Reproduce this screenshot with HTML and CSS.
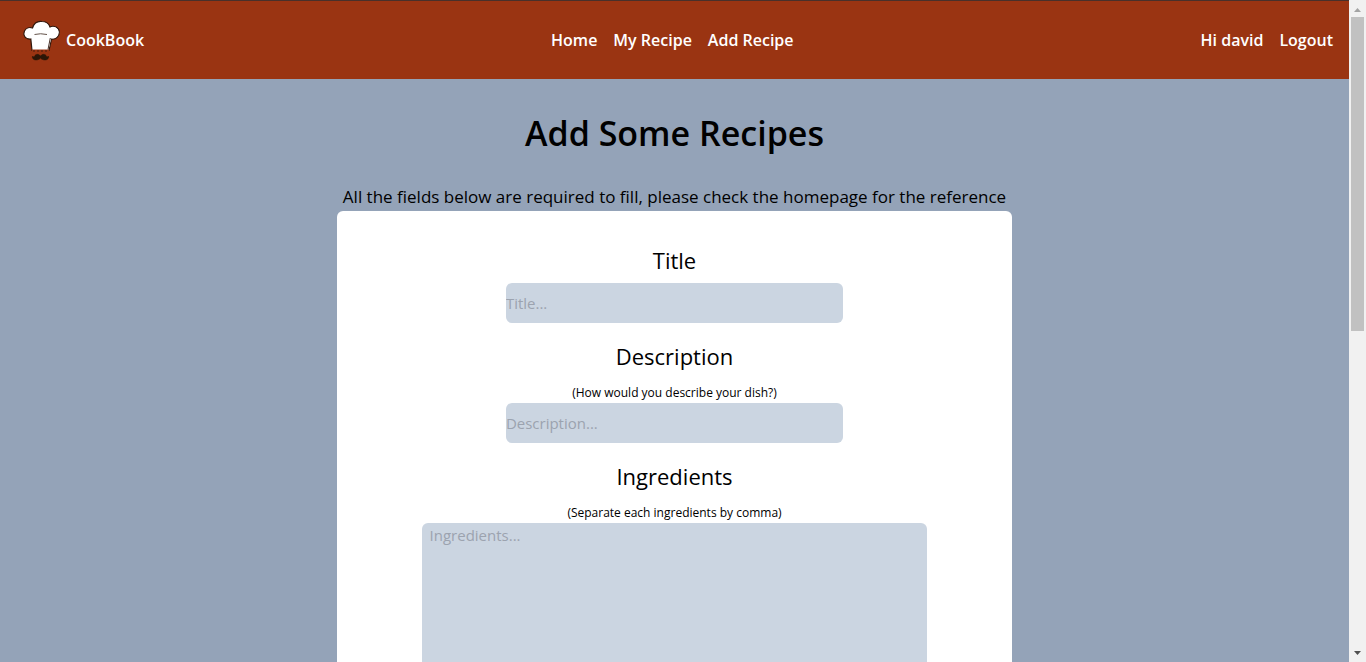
FILE: index.html
```html
<!DOCTYPE html>
<html lang="en">
<head>
<meta charset="utf-8">
<title>CookBook</title>
<link rel="stylesheet" href="styles.css">
</head>
<body>
<div class="page">
  <header class="navbar">
    <a class="brand" href="#">
      <svg class="logo" viewBox="0 0 40 44" aria-hidden="true">
        <g transform="translate(0 1.500)">
        <path d="M10 31 8.800 19.500C2.500 20 0.800 15 2.500 11.500 4 8.500 7.500 7.500 10.500 8.500 12 3.500 16 1.500 20 2 24 2 27 4.500 28 7.500 32 5.500 37 8 37.300 12.500 37.500 17 34 20 29.500 19.500L27 31Z" fill="#fff" stroke="#32190e" stroke-width="1.200"/>
        <path d="M29.500 8.500C33 7.500 36 10 35.800 13 35.500 16.500 32 18.500 28.500 18L26 29" fill="none" stroke="#fff" stroke-width="1.500"/>
        <path d="M28.300 18.500 26 30" fill="none" stroke="#32190e" stroke-width="0.900"/>
        <path d="M12.500 15Q18.500 13.500 25 15" fill="none" stroke="#65554c" stroke-width="1"/>
        <path d="M10 31H27" stroke="#9a3412" stroke-width="2"/>
        <path d="M11 31.500H26" stroke="#4a1c0c" stroke-width="1" stroke-dasharray="2 2"/>
        <path d="M18.500 36.500C16.500 34 13.500 34.500 12.500 36.800 12 37.700 11 37.500 10.500 36.500 9.700 39.500 12.500 41 15.500 40.300 17 40 18 39.300 18.500 38.500 19 39.300 20 40 21.500 40.300 24.500 41 27.300 39.500 26.500 36.500 26 37.500 25 37.700 24.500 36.800 23.500 34.500 20.500 34 18.500 36.500Z" fill="#2c1607" stroke="#2c1607" stroke-width="0.500"/>
        </g>
      </svg>
      <span>CookBook</span>
    </a>
    <nav class="links">
      <a href="#">Home</a>
      <a href="#">My Recipe</a>
      <a href="#">Add Recipe</a>
    </nav>
    <div class="links">
      <span>Hi david</span>
      <a href="#">Logout</a>
    </div>
  </header>
  <main class="content">
    <h1 class="heading">Add Some Recipes</h1>
    <p class="intro">All the fields below are required to fill, please check the homepage for the reference</p>
    <form class="recipe-form">
      <div class="field">
        <label class="label" for="title">Title</label>
        <input class="text-input" id="title" type="text" placeholder="Title...">
      </div>
      <div class="field">
        <label class="label" for="description">Description</label>
        <small class="hint">(How would you describe your dish?)</small>
        <input class="text-input" id="description" type="text" placeholder="Description...">
      </div>
      <div class="field">
        <label class="label" for="ingredients">Ingredients</label>
        <small class="hint">(Separate each ingredients by comma)</small>
        <textarea class="text-area" id="ingredients" placeholder="Ingredients..."></textarea>
      </div>
    </form>
  </main>
</div>
<div class="scrollbar" aria-hidden="true">
  <svg class="arrow" viewBox="0 0 17 17"><path d="M5 12 8.500 8 12 12Z" fill="#a3a3a3"/></svg>
  <div class="track"><div class="thumb"></div></div>
  <svg class="arrow" viewBox="0 0 17 17"><path d="M5 6H12L8.500 10Z" fill="#505050"/></svg>
</div>
</body>
</html>
```
FILE: styles.css
```css
* {
  box-sizing: border-box;
}

body {
  margin: 0;
  height: 100vh;
  display: flex;
  overflow: hidden;
  background: #94a3b8;
  color: #000;
  font-family: "Open Sans", "Noto Sans", sans-serif;
  font-size: 16px;
  line-height: 24px;
}

.page {
  flex: 1;
  min-width: 0;
  overflow: hidden;
}

.navbar {
  display: flex;
  align-items: center;
  justify-content: space-between;
  padding: 17px 16px;
  border-top: 1px solid #49302a;
  background: #9a3412;
  color: #fff;
  font-size: 16px;
  font-weight: 600;
}

.navbar a {
  color: inherit;
  text-decoration: none;
}

.brand {
  display: flex;
  align-items: center;
  gap: 4px;
  padding-left: 6px;
}

.logo {
  width: 40px;
  height: 44px;
}

.links {
  display: flex;
  gap: 16px;
}

.content {
  display: flex;
  flex-direction: column;
  align-items: center;
  padding-top: 32px;
}

.heading {
  margin: 0;
  font-size: 34px;
  line-height: 44px;
  font-weight: 600;
}

.intro {
  margin: 28px 0 0;
  font-size: 17px;
  line-height: 28px;
}

.recipe-form {
  display: flex;
  flex-direction: column;
  gap: 16px;
  width: 50%;
  padding: 32px 0;
  border-radius: 6px;
  background: #fff;
}

.field {
  display: flex;
  flex-direction: column;
  align-items: center;
}

.label {
  padding-bottom: 6px;
  font-size: 22px;
  line-height: 34px;
}

.hint {
  padding-top: 4px;
  font-size: 12px;
  line-height: 20px;
}

.text-input,
.text-area {
  border: 0;
  border-radius: 6px;
  background: #cbd5e1;
  color: #000;
  font: inherit;
  font-size: 15px;
}

.text-input {
  width: 50%;
  height: 40px;
  padding: 0;
}

.text-area {
  width: 75%;
  height: 240px;
  padding: 0 8px;
  resize: none;
}

.text-input::placeholder,
.text-area::placeholder {
  color: #9ca3af;
}

.scrollbar {
  display: flex;
  flex-direction: column;
  width: 17px;
  background: #f1f1f1;
}

.arrow {
  width: 17px;
  height: 17px;
}

.track {
  flex: 1;
  padding: 0 2px;
}

.thumb {
  height: 50%;
  background: #c1c1c1;
}
```
